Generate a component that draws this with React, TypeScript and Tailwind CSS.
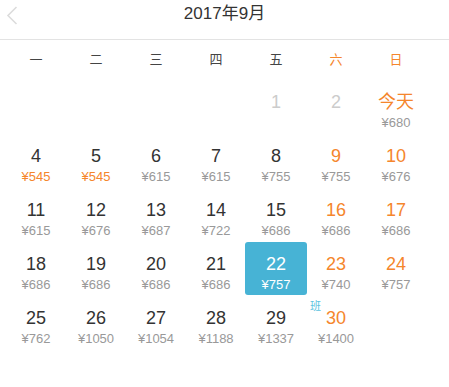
const WEEK = ['一', '二', '三', '四', '五', '六', '日']

type Day = {
  label: string
  price?: string
  weekend?: boolean
  disabled?: boolean
  cheap?: boolean
  selected?: boolean
  tag?: string
}

const days: (Day | null)[] = [
  null, null, null, null,
  { label: '1', disabled: true },
  { label: '2', disabled: true },
  { label: '今天', price: '¥680', weekend: true },
  { label: '4', price: '¥545', cheap: true },
  { label: '5', price: '¥545', cheap: true },
  { label: '6', price: '¥615' },
  { label: '7', price: '¥615' },
  { label: '8', price: '¥755' },
  { label: '9', price: '¥755', weekend: true },
  { label: '10', price: '¥676', weekend: true },
  { label: '11', price: '¥615' },
  { label: '12', price: '¥676' },
  { label: '13', price: '¥687' },
  { label: '14', price: '¥722' },
  { label: '15', price: '¥686' },
  { label: '16', price: '¥686', weekend: true },
  { label: '17', price: '¥686', weekend: true },
  { label: '18', price: '¥686' },
  { label: '19', price: '¥686' },
  { label: '20', price: '¥686' },
  { label: '21', price: '¥686' },
  { label: '22', price: '¥757', selected: true },
  { label: '23', price: '¥740', weekend: true },
  { label: '24', price: '¥757', weekend: true },
  { label: '25', price: '¥762' },
  { label: '26', price: '¥1050' },
  { label: '27', price: '¥1054' },
  { label: '28', price: '¥1188' },
  { label: '29', price: '¥1337' },
  { label: '30', price: '¥1400', weekend: true, tag: '班' },
]

function DayCell({ day }: { day: Day | null }) {
  if (!day) return <div className="h-[54px]" />
  const numColor = day.selected
    ? 'text-white'
    : day.disabled
      ? 'text-[#cccccc]'
      : day.weekend
        ? 'text-[#f5862c]'
        : 'text-[#333333]'
  const priceColor = day.selected ? 'text-white' : day.cheap ? 'text-[#f5862c]' : 'text-[#999999]'
  return (
    <div className="relative h-[54px]">
      {day.tag && (
        <span className="absolute left-[4px] top-[3px] text-[11px] leading-[14px] text-[#5bc3e0]">{day.tag}</span>
      )}
      <div
        className={`-mx-[1px] flex h-[53px] flex-col items-center rounded-[3px] pt-[11px] ${
          day.selected ? 'bg-[#47b3d5]' : ''
        }`}
      >
        <span className={`text-[18px] leading-[22px] ${numColor}`}>{day.label}</span>
        {day.price && <span className={`mt-[2px] text-[13px] leading-[16px] ${priceColor}`}>{day.price}</span>}
      </div>
    </div>
  )
}

export default function App() {
  return (
    <div className="h-[387px] w-[449px] bg-white font-['Liberation_Sans','Noto_Sans_CJK_SC',sans-serif]">
      {/* Header */}
      <div className="relative flex h-[40px] items-center justify-center border-b border-[#e3e3e3]">
        <svg className="absolute left-[6px] top-[6px]" width="12" height="19" viewBox="0 0 12 19" fill="none">
          <path d="M10.5 1 L2 9.5 L10.5 18" stroke="#dcdcdc" strokeWidth="1.6" />
        </svg>
        <span className="mt-[-12px] text-[17px] text-[#333333]">2017年9月</span>
      </div>

      {/* Weekday row */}
      <div className="grid h-[40px] grid-cols-[repeat(7,60px)] items-center pl-[6px]">
        {WEEK.map((w, i) => (
          <span key={w} className={`text-center text-[13px] ${i >= 5 ? 'text-[#f5862c]' : 'text-[#444444]'}`}>
            {w}
          </span>
        ))}
      </div>

      {/* Days */}
      <div className="grid grid-cols-[repeat(7,60px)] pl-[6px]">
        {days.map((d, i) => (
          <DayCell key={i} day={d} />
        ))}
      </div>
    </div>
  )
}
